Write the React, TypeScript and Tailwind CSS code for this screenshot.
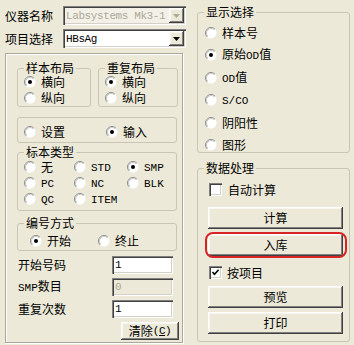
import React from 'react';

const SUNKEN =
  'shadow-[inset_1px_1px_0_#808080,inset_2px_2px_0_#404040,inset_-1px_-1px_0_#ffffff,inset_-2px_-2px_0_#D4D0C8]';
const RAISED =
  'shadow-[inset_-1px_-1px_0_#404040,inset_1px_1px_0_#ffffff,inset_-2px_-2px_0_#808080,inset_2px_2px_0_#F7F6F0]';

const M = ({ children, className = '' }: { children: React.ReactNode; className?: string }) => (
  <span className={"font-['Liberation_Mono',monospace] text-[11px] " + className}>{children}</span>
);

function RadioDot({ checked }: { checked?: boolean }) {
  return (
    <svg width="12" height="12" viewBox="0 0 12 12" className="shrink-0">
      <circle cx="6" cy="6" r="5.5" fill="#ffffff" />
      <path d="M2.11 9.89A5.5 5.5 0 0 1 9.89 2.11" fill="none" stroke="#8a8a8a" strokeWidth="1" />
      <path d="M2.82 9.18A4.5 4.5 0 0 1 9.18 2.82" fill="none" stroke="#c8c8c8" strokeWidth="1" />
      {checked && <circle cx="6" cy="6" r="2" fill="#000000" />}
    </svg>
  );
}

function Radio({
  checked,
  children,
  className = '',
}: {
  checked?: boolean;
  children: React.ReactNode;
  className?: string;
}) {
  return (
    <div className={'flex items-center h-[16px] ' + className}>
      <RadioDot checked={checked} />
      <span className="ml-[5px] whitespace-nowrap leading-[12px]">{children}</span>
    </div>
  );
}

function Check({ checked }: { checked?: boolean }) {
  return (
    <div className={'w-[13px] h-[13px] bg-white shrink-0 flex items-center justify-center ' + SUNKEN}>
      {checked && (
        <svg width="7" height="7" viewBox="0 0 7 7">
          <path d="M0.5 3 L2.5 5.2 L6.6 0.8" stroke="#000" strokeWidth="1.6" fill="none" />
        </svg>
      )}
    </div>
  );
}

function Group({
  title,
  className = '',
  children,
}: {
  title?: string;
  className?: string;
  children?: React.ReactNode;
}) {
  return (
    <div className={'relative border border-[#C9C6B6] rounded-[3px] shrink-0 ' + className}>
      {title && (
        <span className="absolute -top-[7px] left-[6px] px-[2px] bg-[#ECE9D8] leading-[12px] whitespace-nowrap">
          {title}
        </span>
      )}
      {children}
    </div>
  );
}

function Combo({ value, disabled }: { value: string; disabled?: boolean }) {
  return (
    <div
      className={
        'w-[123px] h-[19px] flex items-stretch p-[2px] ' +
        SUNKEN +
        (disabled ? ' bg-[#F3F1E7]' : ' bg-white')
      }
    >
      <span className="flex-1 min-w-0 flex items-center pl-[1px] overflow-hidden whitespace-nowrap">
        <M className={'tracking-[-0.4px] ' + (disabled ? 'text-[#ACA899]' : 'text-black')}>{value}</M>
      </span>
      <div className={'w-[15px] shrink-0 bg-[#ECE9D8] flex items-center justify-center ' + RAISED}>
        <svg width="7" height="4" viewBox="0 0 7 4">
          <polygon points="0,0 7,0 3.5,4" fill={disabled ? '#ACA899' : '#000000'} />
        </svg>
      </div>
    </div>
  );
}

function Btn({ children, className = '' }: { children: React.ReactNode; className?: string }) {
  return (
    <div
      className={
        'bg-[#ECE9D8] flex items-center justify-center shrink-0 whitespace-nowrap ' + RAISED + ' ' + className
      }
    >
      {children}
    </div>
  );
}

function Field({ label, value, disabled }: { label: React.ReactNode; value: string; disabled?: boolean }) {
  return (
    <div className="flex items-center h-[18px]">
      <span className="w-[95px] pl-[1px] whitespace-nowrap">{label}</span>
      <div
        className={
          'w-[61px] h-[18px] flex items-center pl-[3px] ' +
          SUNKEN +
          (disabled ? ' bg-[#ECE9D8]' : ' bg-white')
        }
      >
        <M className={disabled ? 'text-[#ACA899]' : 'text-black'}>{value}</M>
      </div>
    </div>
  );
}

export default function App() {
  return (
    <div className="w-[354px] h-[345px] bg-[#ECE9D8] flex text-[12px] leading-[14px] text-black font-['Noto_Sans_CJK_SC',sans-serif] overflow-hidden">
      {/* Left column */}
      <div className="w-[190px] shrink-0 pl-[5px] pt-[6px] flex flex-col">
        <div className="flex items-center h-[19px]">
          <span className="w-[58px] whitespace-nowrap">仪器名称</span>
          <Combo disabled value="Labsystems Mk3-1" />
        </div>
        <div className="flex items-center h-[19px] mt-[4px]">
          <span className="w-[58px] whitespace-nowrap">项目选择</span>
          <Combo value="HBsAg" />
        </div>

        <div className="mt-[5px] w-[178px] h-[290px] border border-[#ACA899] shadow-[1px_1px_0_#ffffff,inset_1px_1px_0_#ffffff] pl-[11px] flex flex-col">
          <div className="flex mt-[14px]">
            <Group title="样本布局" className="w-[74px] h-[39px] pt-[5px] pl-[6px]">
              <Radio checked>横向</Radio>
              <Radio>纵向</Radio>
            </Group>
            <Group title="重复布局" className="w-[80px] h-[39px] ml-[7px] pt-[5px] pl-[6px]">
              <Radio checked>横向</Radio>
              <Radio>纵向</Radio>
            </Group>
          </div>

          <Group className="w-[160px] h-[26px] mt-[10px] pt-[6px] pl-[6px] flex items-start">
            <Radio className="w-[82px]">设置</Radio>
            <Radio checked>输入</Radio>
          </Group>

          <Group title="标本类型" className="w-[160px] h-[59px] mt-[9px] pt-[6px] pl-[6px]">
            <div className="grid grid-cols-[50px_53px_1fr]">
              <Radio>无</Radio>
              <Radio>
                <M>STD</M>
              </Radio>
              <Radio checked>
                <M>SMP</M>
              </Radio>
              <Radio>
                <M>PC</M>
              </Radio>
              <Radio>
                <M>NC</M>
              </Radio>
              <Radio>
                <M>BLK</M>
              </Radio>
              <Radio>
                <M>QC</M>
              </Radio>
              <Radio>
                <M>ITEM</M>
              </Radio>
            </div>
          </Group>

          <Group title="编号方式" className="w-[160px] h-[28px] mt-[12px] pt-[9px] pl-[12px] flex items-start">
            <Radio checked className="w-[68px]">
              开始
            </Radio>
            <Radio>终止</Radio>
          </Group>

          <div className="mt-[5px] flex flex-col gap-[4px]">
            <Field label="开始号码" value="1" />
            <Field
              label={
                <>
                  <M>SMP</M>数目
                </>
              }
              value="0"
              disabled
            />
            <Field label="重复次数" value="1" />
          </div>

          <Btn className="mt-[4px] ml-[104px] w-[58px] h-[18px]">
            清除
            <M className="tracking-[-0.5px]">
              (<span className="underline">C</span>)
            </M>
          </Btn>
        </div>
      </div>

      {/* Right column */}
      <div className="flex-1 pl-[7px] pt-[12px] flex flex-col">
        <Group title="显示选择" className="w-[153px] h-[141px] pt-[14px] pl-[7px]">
          <div className="h-[124px] flex flex-col justify-between">
            <Radio className="!h-[12px]">样本号</Radio>
            <Radio checked className="!h-[12px]">
              原始<M>OD</M>值
            </Radio>
            <Radio className="!h-[12px]">
              <M>OD</M>值
            </Radio>
            <Radio className="!h-[12px]">
              <M>S/CO</M>
            </Radio>
            <Radio className="!h-[12px]">阴阳性</Radio>
            <Radio className="!h-[12px]">图形</Radio>
          </div>
        </Group>

        <Group title="数据处理" className="w-[153px] h-[174px] mt-[15px] pt-[14px] pl-[10px] flex flex-col">
          <div className="flex items-center h-[13px] ml-[1px]">
            <Check />
            <span className="ml-[6px] leading-[12px]">自动计算</span>
          </div>
          <Btn className="mt-[11px] w-[135px] h-[22px]">计算</Btn>
          <div className="relative mt-[5px] w-[135px] h-[22px]">
            <Btn className="w-[135px] h-[22px]">入库</Btn>
            <div className="absolute -left-[3px] -top-[2px] -right-[4px] -bottom-[2px] border-2 border-[#D92424] rounded-[8px] pointer-events-none" />
          </div>
          <div className="flex items-center h-[13px] mt-[10px] ml-[1px]">
            <Check checked />
            <span className="ml-[5px] leading-[12px]">按项目</span>
          </div>
          <Btn className="mt-[7px] w-[135px] h-[22px]">预览</Btn>
          <Btn className="mt-[4px] w-[135px] h-[22px]">打印</Btn>
        </Group>
      </div>
    </div>
  );
}
